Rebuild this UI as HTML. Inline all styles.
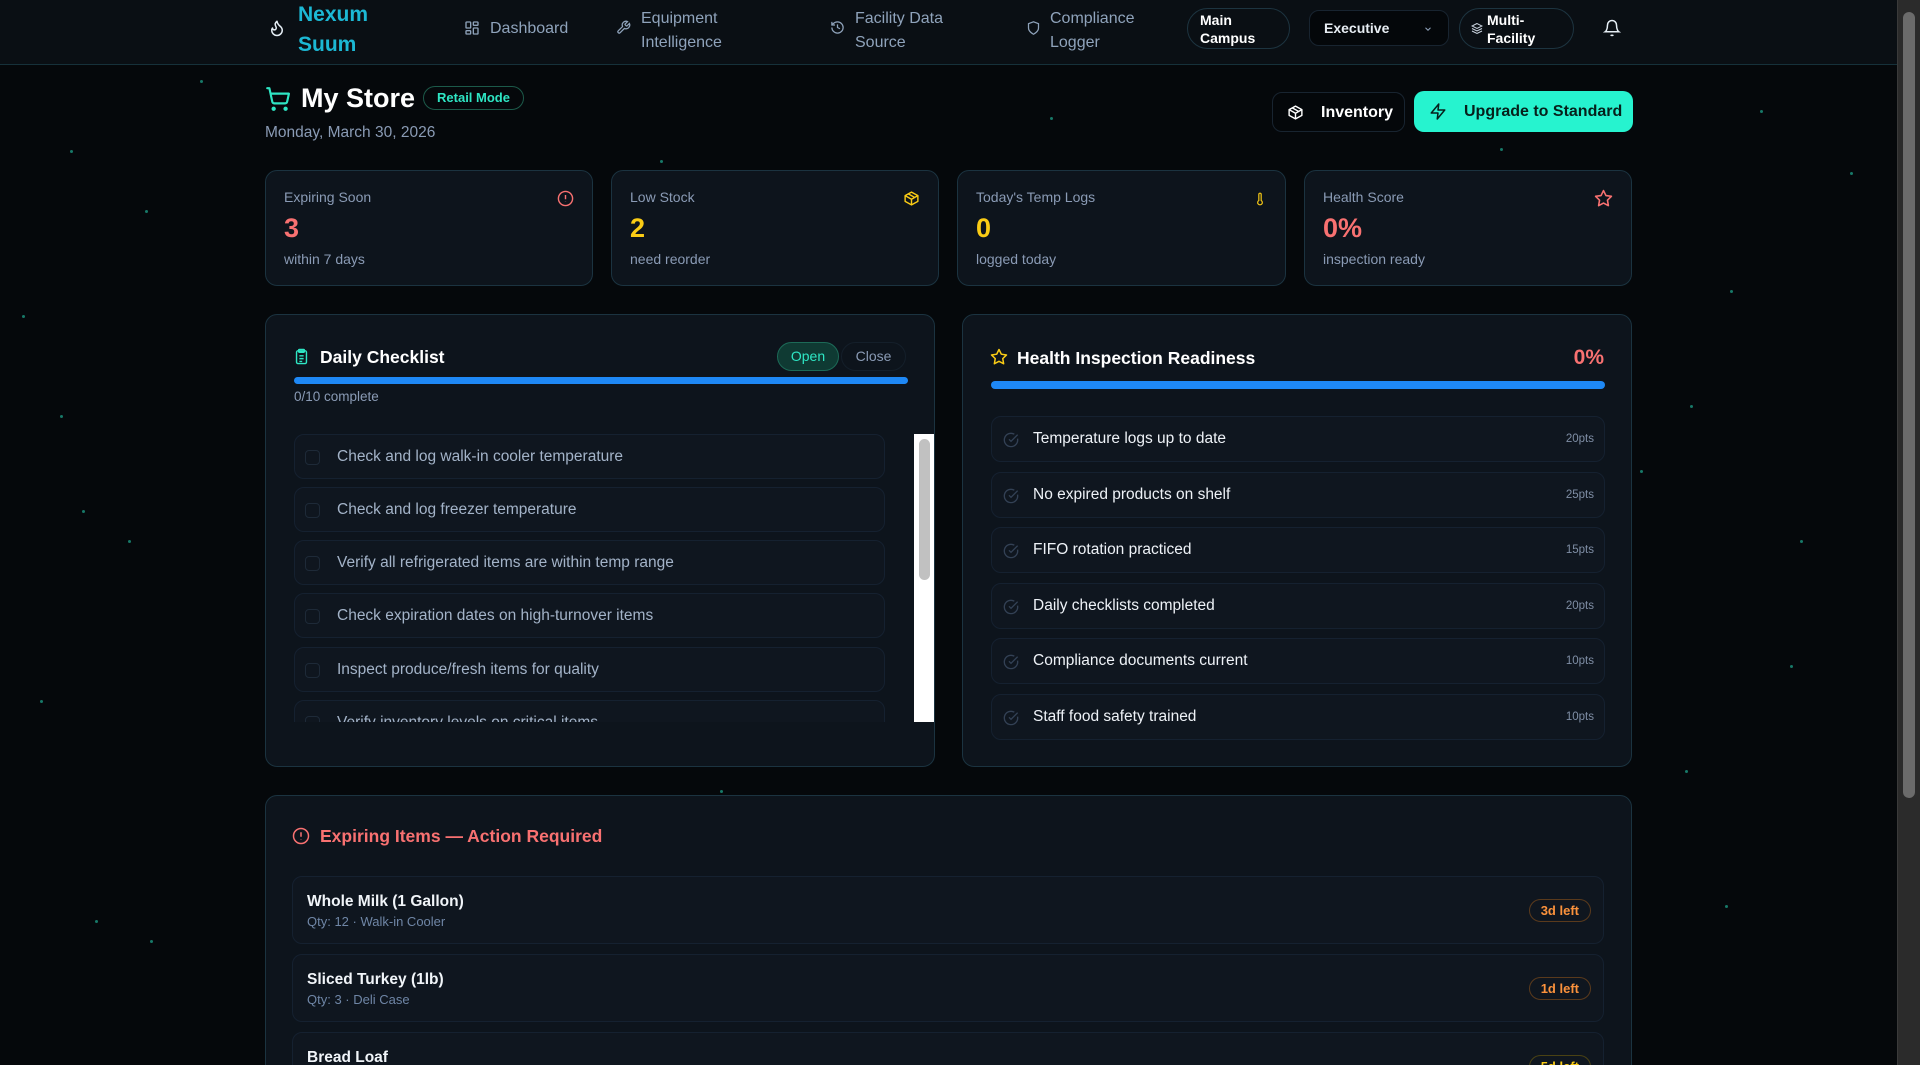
<!DOCTYPE html>
<html style="overflow:hidden;width:1920px;height:1065px"><head><meta charset="utf-8">
<style>
*{box-sizing:border-box;margin:0;padding:0}
html,body{overflow:hidden}
body{width:1920px;height:1065px;background:#05080b;font-family:"Liberation Sans",sans-serif;color:#e2e8f0}
#w{position:relative;width:1920px;height:1065px;overflow:hidden}
.a{position:absolute}
.dot{position:absolute;width:3px;height:3px;border-radius:50%;background:#1fa88f;opacity:.7}
.hdr{position:absolute;left:0;top:0;width:1897px;height:65px;background:#0a0f14;border-bottom:1px solid #16313a}
.nav{position:absolute;color:#8fa3bb;font-size:16px;line-height:24px}
.pill{position:absolute;border:1px solid #1d3440;border-radius:22px;color:#fff;font-weight:bold;font-size:14px;line-height:18px}
.card{position:absolute;background:#0d141c;border:1px solid #1b3340;border-radius:12px}
.lbl{position:absolute;left:18px;top:18px;font-size:14px;color:#8a9bb5}
.val{position:absolute;left:18px;top:42px;font-size:27px;font-weight:bold}
.sub{position:absolute;left:18px;top:80px;font-size:14px;color:#8a9bb5}
.item{position:absolute;background:#0f161f;border:1px solid #152130;border-radius:10px}
.cb{position:absolute;left:10px;top:15px;width:15px;height:15px;border:1px solid #1e2a38;border-radius:4px}
.ct{position:absolute;left:42px;top:13px;font-size:15.5px;color:#a3b3c8}
.rt{position:absolute;left:41px;top:13px;font-size:15.5px;color:#eef2f7}
.pts{position:absolute;right:10px;top:16px;font-size:11.5px;color:#7f8ea5}
.ex{position:absolute;left:292px;width:1312px;height:68px;background:#0f161f;border:1px solid #152130;border-radius:10px}
.en{position:absolute;left:14px;top:16px;font-size:15.5px;font-weight:bold;color:#f1f5f9}
.es{position:absolute;left:14px;top:37px;font-size:13px;color:#6f86a6}
.eb{position:absolute;right:12px;top:22px;height:23px;padding:0 11px;border:1px solid #5a3a1c;border-radius:12px;color:#fb923c;font-size:13px;font-weight:bold;line-height:21px}
</style></head><body><div id="w">
<div class="dot" style="left:200px;top:80px"></div><div class="dot" style="left:70px;top:150px"></div><div class="dot" style="left:145px;top:210px"></div><div class="dot" style="left:22px;top:315px"></div><div class="dot" style="left:82px;top:510px"></div><div class="dot" style="left:60px;top:415px"></div><div class="dot" style="left:128px;top:540px"></div><div class="dot" style="left:95px;top:920px"></div><div class="dot" style="left:150px;top:940px"></div><div class="dot" style="left:40px;top:700px"></div><div class="dot" style="left:1050px;top:117px"></div><div class="dot" style="left:660px;top:160px"></div><div class="dot" style="left:1760px;top:110px"></div><div class="dot" style="left:1730px;top:290px"></div><div class="dot" style="left:1800px;top:540px"></div><div class="dot" style="left:1640px;top:470px"></div><div class="dot" style="left:1725px;top:905px"></div><div class="dot" style="left:1790px;top:665px"></div><div class="dot" style="left:1685px;top:770px"></div><div class="dot" style="left:720px;top:790px"></div><div class="dot" style="left:1690px;top:405px"></div><div class="dot" style="left:1850px;top:172px"></div><div class="dot" style="left:1400px;top:185px"></div><div class="dot" style="left:1500px;top:148px"></div>

<div class="hdr"></div>
<svg class="a" style="left:268px;top:17px" width="18" height="22" viewBox="0 0 24 24" fill="none" stroke="#e5eef5" stroke-width="2" stroke-linecap="round" stroke-linejoin="round"><path d="M8.5 14.5A2.5 2.5 0 0 0 11 12c0-1.38-.5-2-1-3-1.07-2.14-.22-4.05 2-6 .5 2.5 2 4.9 4 6.5 2 1.6 3 3.5 3 5.5a7 7 0 1 1-14 0c0-1.15.43-2.29 1-3a2.5 2.5 0 0 0 2.5 2.5z"/></svg>
<div class="a" style="left:298px;top:0px;font-size:21px;font-weight:bold;color:#1cb8d4;line-height:30px">Nexum<br>Suum</div>
<svg class="a" style="left:464px;top:20px" width="16" height="16" viewBox="0 0 24 24" fill="none" stroke="#8fa3bb" stroke-width="2"><rect x="3" y="3" width="7" height="9" rx="1"/><rect x="14" y="3" width="7" height="5" rx="1"/><rect x="14" y="12" width="7" height="9" rx="1"/><rect x="3" y="16" width="7" height="5" rx="1"/></svg>
<div class="nav" style="left:490px;top:17px">Dashboard</div>
<svg class="a" style="left:616px;top:20px" width="15" height="15" viewBox="0 0 24 24" fill="none" stroke="#8fa3bb" stroke-width="2"><path d="M14.7 6.3a1 1 0 0 0 0 1.4l1.6 1.6a1 1 0 0 0 1.4 0l3.77-3.77a6 6 0 0 1-7.94 7.94l-6.91 6.91a2.12 2.12 0 0 1-3-3l6.91-6.91a6 6 0 0 1 7.94-7.94l-3.76 3.76z"/></svg>
<div class="nav" style="left:641px;top:7px">Equipment<br>Intelligence</div>
<svg class="a" style="left:830px;top:20px" width="15" height="15" viewBox="0 0 24 24" fill="none" stroke="#8fa3bb" stroke-width="2"><path d="M3 12a9 9 0 1 0 9-9 9.75 9.75 0 0 0-6.74 2.74L3 8"/><path d="M3 3v5h5"/><path d="M12 7v5l4 2"/></svg>
<div class="nav" style="left:855px;top:7px">Facility Data<br>Source</div>
<svg class="a" style="left:1026px;top:20px" width="15" height="16" viewBox="0 0 24 24" fill="none" stroke="#8fa3bb" stroke-width="2"><path d="M12 22s8-4 8-10V5l-8-3-8 3v7c0 6 8 10 8 10z"/></svg>
<div class="nav" style="left:1050px;top:7px">Compliance<br>Logger</div>
<div class="pill" style="left:1187px;top:8px;width:103px;height:41px;padding:2px 0 0 12px">Main<br>Campus</div>
<div class="a" style="left:1309px;top:10px;width:140px;height:36px;background:#04070a;border:1px solid #182430;border-radius:10px;color:#e7edf3;font-size:14px;font-weight:bold;padding:9px 0 0 14px">Executive<svg style="position:absolute;right:14px;top:13px" width="12" height="10" viewBox="0 0 24 24" fill="none" stroke="#8fa3bb" stroke-width="2.5"><path d="M6 9l6 6 6-6"/></svg></div>
<div class="pill" style="left:1459px;top:8px;width:115px;height:41px;padding:2px 0 0 27px"><svg style="position:absolute;left:11px;top:13px" width="12" height="13" viewBox="0 0 24 24" fill="none" stroke="#cbd5e1" stroke-width="2"><path d="M12 2 2 7l10 5 10-5-10-5z"/><path d="M2 17l10 5 10-5"/><path d="M2 12l10 5 10-5"/></svg>Multi-<br>Facility</div>
<svg class="a" style="left:1603px;top:18px" width="18" height="20" viewBox="0 0 24 24" fill="none" stroke="#e5eef5" stroke-width="2"><path d="M6 8a6 6 0 0 1 12 0c0 7 3 9 3 9H3s3-2 3-9"/><path d="M10.3 21a1.94 1.94 0 0 0 3.4 0"/></svg>

<div class="a" style="left:1897px;top:0;width:23px;height:1065px;background:#2b2b2b;border-left:1px solid #3a3a3a"></div>
<div class="a" style="left:1903px;top:12px;width:12px;height:786px;background:#6b6b6b;border-radius:6px"></div>

<svg class="a" style="left:265px;top:86px" width="26" height="26" viewBox="0 0 24 24" fill="none" stroke="#2ee6c4" stroke-width="2" stroke-linecap="round" stroke-linejoin="round"><circle cx="8" cy="21" r="1"/><circle cx="19" cy="21" r="1"/><path d="M2.05 2.05h2l2.66 12.42a2 2 0 0 0 2 1.58h9.78a2 2 0 0 0 1.95-1.57l1.65-7.43H5.12"/></svg>
<div class="a" style="left:301px;top:83px;font-size:27px;font-weight:bold;color:#fff">My Store</div>
<div class="a" style="left:423px;top:86px;width:101px;height:24px;border:1px solid #1c5a4a;border-radius:12px;color:#2ee6c4;font-size:13px;font-weight:bold;text-align:center;line-height:22px">Retail Mode</div>
<div class="a" style="left:265px;top:124px;font-size:15.5px;color:#8a9bb5">Monday, March 30, 2026</div>

<div class="a" style="left:1272px;top:92px;width:133px;height:40px;background:#04070a;border:1px solid #182430;border-radius:10px;color:#fff;font-size:16px;font-weight:bold;padding:11px 0 0 48px"><svg style="position:absolute;left:14px;top:11px" width="17" height="17" viewBox="0 0 24 24" fill="none" stroke="#fff" stroke-width="2" stroke-linejoin="round"><path d="M21 8 12 3 3 8v8l9 5 9-5z"/><path d="M3 8l9 5 9-5M12 13v8M7.5 5.5l9 5"/></svg>Inventory</div>
<div class="a" style="left:1414px;top:91px;width:219px;height:41px;background:#26f3cf;border-radius:10px;color:#06201b;font-size:16px;font-weight:bold;padding:12px 0 0 50px"><svg style="position:absolute;left:15px;top:11px" width="18" height="19" viewBox="0 0 24 24" fill="none" stroke="#06201b" stroke-width="2" stroke-linejoin="round"><path d="M13 2 3 14h9l-1 8 10-12h-9l1-8z"/></svg>Upgrade to Standard</div>

<div class="card" style="left:265px;top:170px;width:328px;height:116px"><div class="lbl">Expiring Soon</div><div class="val" style="color:#f87171">3</div><div class="sub">within 7 days</div><svg class="a" style="right:18px;top:19px" width="17" height="17" viewBox="0 0 24 24" fill="none" stroke="#f87171" stroke-width="2"><circle cx="12" cy="12" r="10"/><path d="M12 7v6M12 16.5v.5"/></svg></div>
<div class="card" style="left:611px;top:170px;width:328px;height:116px"><div class="lbl">Low Stock</div><div class="val" style="color:#facc15">2</div><div class="sub">need reorder</div><svg class="a" style="right:18px;top:19px" width="17" height="17" viewBox="0 0 24 24" fill="none" stroke="#facc15" stroke-width="2" stroke-linejoin="round"><path d="M21 8 12 3 3 8v8l9 5 9-5z"/><path d="M3 8l9 5 9-5M12 13v8M7.5 5.5l9 5"/></svg></div>
<div class="card" style="left:957px;top:170px;width:329px;height:116px"><div class="lbl">Today's Temp Logs</div><div class="val" style="color:#facc15">0</div><div class="sub">logged today</div><svg class="a" style="right:18px;top:19px" width="14" height="18" viewBox="0 0 24 24" fill="none" stroke="#facc15" stroke-width="2"><path d="M14 4v10.54a4 4 0 1 1-4 0V4a2 2 0 0 1 4 0z"/></svg></div>
<div class="card" style="left:1304px;top:170px;width:328px;height:116px"><div class="lbl">Health Score</div><div class="val" style="color:#f87171">0%</div><div class="sub">inspection ready</div><svg class="a" style="right:18px;top:18px" width="19" height="19" viewBox="0 0 24 24" fill="none" stroke="#f87171" stroke-width="2" stroke-linejoin="round"><path d="M12 2l3.09 6.26L22 9.27l-5 4.87 1.18 6.88L12 17.77l-6.18 3.25L7 14.14 2 9.27l6.91-1.01z"/></svg></div>

<div class="card" style="left:265px;top:314px;width:670px;height:453px;overflow:hidden">
<svg class="a" style="left:27px;top:32px" width="17" height="19" viewBox="0 0 24 24" fill="none" stroke="#2ee6c4" stroke-width="2"><rect x="5" y="4" width="14" height="18" rx="2"/><rect x="8" y="2" width="8" height="4" rx="1"/><path d="M9 11h6M9 15h6M9 19h4"/></svg>
<div class="a" style="left:54px;top:32px;font-size:17.5px;font-weight:bold;color:#fff">Daily Checklist</div>
<div class="a" style="left:511px;top:27px;width:62px;height:29px;background:#0f3a33;border:1px solid #1c6a57;border-radius:15px;color:#2ee6c4;font-size:14px;text-align:center;line-height:27px">Open</div>
<div class="a" style="left:575px;top:27px;width:65px;height:29px;border:1px solid #141f2a;border-radius:15px;color:#8a9bb5;font-size:14px;text-align:center;line-height:27px">Close</div>
<div class="a" style="left:28px;top:62px;width:614px;height:7px;background:#1e88f5;border-radius:4px"></div>
<div class="a" style="left:28px;top:74px;font-size:13.5px;color:#8a9bb5">0/10 complete</div>
<div class="a" style="left:0;top:119px;width:670px;height:288px;overflow:hidden">
<div class="item" style="left:28px;top:0;width:591px;height:45px"><div class="cb"></div><div class="ct">Check and log walk-in cooler temperature</div></div>
<div class="item" style="left:28px;top:53px;width:591px;height:45px"><div class="cb"></div><div class="ct">Check and log freezer temperature</div></div>
<div class="item" style="left:28px;top:106px;width:591px;height:45px"><div class="cb"></div><div class="ct">Verify all refrigerated items are within temp range</div></div>
<div class="item" style="left:28px;top:159px;width:591px;height:45px"><div class="cb"></div><div class="ct">Check expiration dates on high-turnover items</div></div>
<div class="item" style="left:28px;top:213px;width:591px;height:45px"><div class="cb"></div><div class="ct">Inspect produce/fresh items for quality</div></div>
<div class="item" style="left:28px;top:266px;width:591px;height:45px"><div class="cb"></div><div class="ct">Verify inventory levels on critical items</div></div>
<div class="a" style="left:648px;top:0;width:22px;height:288px;background:#fff"></div>
<div class="a" style="left:653px;top:5px;width:11px;height:141px;background:#c1c1c1;border-radius:6px"></div>
</div>
</div>

<div class="card" style="left:962px;top:314px;width:670px;height:453px">
<svg class="a" style="left:27px;top:33px" width="18" height="18" viewBox="0 0 24 24" fill="none" stroke="#facc15" stroke-width="2" stroke-linejoin="round"><path d="M12 2l3.09 6.26L22 9.27l-5 4.87 1.18 6.88L12 17.77l-6.18 3.25L7 14.14 2 9.27l6.91-1.01z"/></svg>
<div class="a" style="left:54px;top:33px;font-size:17.5px;font-weight:bold;color:#fff">Health Inspection Readiness</div>
<div class="a" style="right:27px;top:31px;font-size:21px;font-weight:bold;color:#f87171">0%</div>
<div class="a" style="left:28px;top:66px;width:614px;height:8px;background:#1e88f5;border-radius:4px"></div>
<div class="item" style="left:28px;top:101px;width:614px;height:46px"><svg class="a" style="left:11px;top:15px" width="16" height="16" viewBox="0 0 24 24" fill="none" stroke="#334155" stroke-width="2"><path d="M21.8 10A10 10 0 1 1 17 3.3"/><path d="M9 11l3 3L22 4"/></svg><div class="rt">Temperature logs up to date</div><div class="pts">20pts</div></div>
<div class="item" style="left:28px;top:157px;width:614px;height:46px"><svg class="a" style="left:11px;top:15px" width="16" height="16" viewBox="0 0 24 24" fill="none" stroke="#334155" stroke-width="2"><path d="M21.8 10A10 10 0 1 1 17 3.3"/><path d="M9 11l3 3L22 4"/></svg><div class="rt">No expired products on shelf</div><div class="pts">25pts</div></div>
<div class="item" style="left:28px;top:212px;width:614px;height:46px"><svg class="a" style="left:11px;top:15px" width="16" height="16" viewBox="0 0 24 24" fill="none" stroke="#334155" stroke-width="2"><path d="M21.8 10A10 10 0 1 1 17 3.3"/><path d="M9 11l3 3L22 4"/></svg><div class="rt">FIFO rotation practiced</div><div class="pts">15pts</div></div>
<div class="item" style="left:28px;top:268px;width:614px;height:46px"><svg class="a" style="left:11px;top:15px" width="16" height="16" viewBox="0 0 24 24" fill="none" stroke="#334155" stroke-width="2"><path d="M21.8 10A10 10 0 1 1 17 3.3"/><path d="M9 11l3 3L22 4"/></svg><div class="rt">Daily checklists completed</div><div class="pts">20pts</div></div>
<div class="item" style="left:28px;top:323px;width:614px;height:46px"><svg class="a" style="left:11px;top:15px" width="16" height="16" viewBox="0 0 24 24" fill="none" stroke="#334155" stroke-width="2"><path d="M21.8 10A10 10 0 1 1 17 3.3"/><path d="M9 11l3 3L22 4"/></svg><div class="rt">Compliance documents current</div><div class="pts">10pts</div></div>
<div class="item" style="left:28px;top:379px;width:614px;height:46px"><svg class="a" style="left:11px;top:15px" width="16" height="16" viewBox="0 0 24 24" fill="none" stroke="#334155" stroke-width="2"><path d="M21.8 10A10 10 0 1 1 17 3.3"/><path d="M9 11l3 3L22 4"/></svg><div class="rt">Staff food safety trained</div><div class="pts">10pts</div></div>
</div>

<div class="card" style="left:265px;top:795px;width:1367px;height:290px"></div>
<svg class="a" style="left:292px;top:827px" width="18" height="18" viewBox="0 0 24 24" fill="none" stroke="#f87171" stroke-width="2"><circle cx="12" cy="12" r="10"/><path d="M12 7v6M12 16.5v.5"/></svg>
<div class="a" style="left:320px;top:826px;font-size:17.5px;font-weight:bold;color:#f87171">Expiring Items — Action Required</div>
<div class="ex" style="top:876px"><div class="en">Whole Milk (1 Gallon)</div><div class="es">Qty: 12 · Walk-in Cooler</div><div class="eb">3d left</div></div>
<div class="ex" style="top:954px"><div class="en">Sliced Turkey (1lb)</div><div class="es">Qty: 3 · Deli Case</div><div class="eb">1d left</div></div>
<div class="ex" style="top:1032px"><div class="en">Bread Loaf</div><div class="es">Qty: 8 · Bakery</div><div class="eb" style="color:#facc15;border-color:#4a4214">5d left</div></div>
</div></body></html>
